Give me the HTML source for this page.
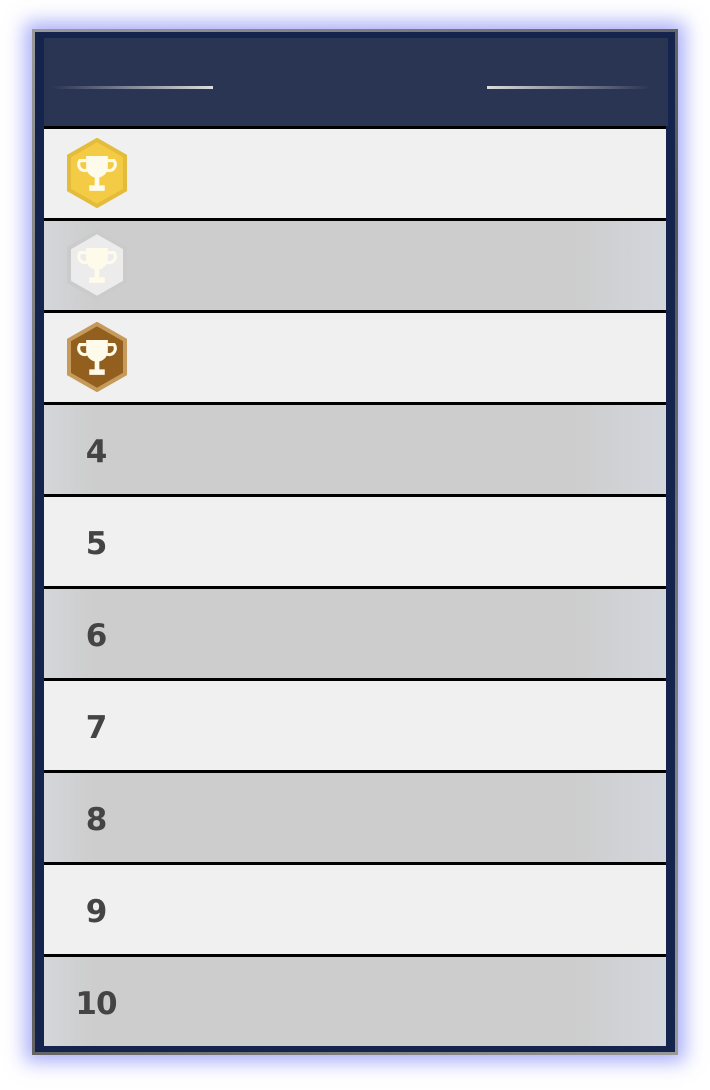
<!DOCTYPE html>
<html><head><style>
html,body{margin:0;padding:0;background:#fff;width:710px;height:1090px;overflow:hidden}
.outer{position:absolute;left:32px;top:29px;width:646px;height:1026px;box-sizing:border-box;
background:linear-gradient(135deg,#9a9a9a,#555 50%,#999);box-shadow:0 0 18px 7px rgba(100,110,240,.55)}
.navy{position:absolute;left:3px;top:3px;right:3px;bottom:3px;background:#15244d}
.head{position:absolute;left:44px;top:38px;width:624px;height:88px;background:#2a3554}
.ln{position:absolute;top:86px;height:3px}
.row{position:absolute;left:44px;width:622px;height:89px;border-top:3px solid #000}
.w{background:#f0f0f0}
.g{background:linear-gradient(90deg,#d4d6da 0,#cdcdcd 8%,#cdcdcd 85%,#d3d6dc 100%)}
.num{position:absolute;left:0;width:104px;text-align:center;top:29px;font:bold 31px "DejaVu Sans",sans-serif;color:#444;letter-spacing:-1px}
svg{position:absolute;left:22px;top:9px}
</style></head><body>
<div class="outer"><div class="navy"></div></div>
<div class="head"></div>
<div class="ln" style="left:52px;width:161px;background:linear-gradient(90deg,rgba(255,255,255,0),#ddd)"></div>
<div class="ln" style="left:487px;width:163px;background:linear-gradient(90deg,#ddd,rgba(255,255,255,0))"></div>

<div class="row w" style="top:126px"><svg width="62" height="72" viewBox="0 0 62 72"><polygon points="31,2 59,18 59,52 31,68 3,52 3,18" fill="#f4cb45" stroke="#e2bc3a" stroke-width="4"/><g fill="#fffbea" stroke="#fffbea" transform="translate(31 35) scale(1.55) translate(-31 -36)"><path d="M24 25h14v7a7 7 0 0 1-14 0z" stroke="none"/><path d="M24 28h-4a4 4 0 0 0 5 6 M38 28h4a4 4 0 0 1-5 6" fill="none" stroke-width="2"/><path d="M29.5 38h3v6h-3z M26 44h10v3.5h-10z" stroke="none"/></g></svg></div>
<div class="row g" style="top:218px"><svg width="62" height="72" viewBox="0 0 62 72"><polygon points="31,2 59,18 59,52 31,68 3,52 3,18" fill="#ececec" stroke="#cbcbcb" stroke-width="4"/><g fill="#fffbea" stroke="#fffbea" transform="translate(31 35) scale(1.55) translate(-31 -36)"><path d="M24 25h14v7a7 7 0 0 1-14 0z" stroke="none"/><path d="M24 28h-4a4 4 0 0 0 5 6 M38 28h4a4 4 0 0 1-5 6" fill="none" stroke-width="2"/><path d="M29.5 38h3v6h-3z M26 44h10v3.5h-10z" stroke="none"/></g></svg></div>
<div class="row w" style="top:310px"><svg width="62" height="72" viewBox="0 0 62 72"><polygon points="31,2 59,18 59,52 31,68 3,52 3,18" fill="#925f1e" stroke="#c59a5a" stroke-width="4"/><g fill="#fffbea" stroke="#fffbea" transform="translate(31 35) scale(1.55) translate(-31 -36)"><path d="M24 25h14v7a7 7 0 0 1-14 0z" stroke="none"/><path d="M24 28h-4a4 4 0 0 0 5 6 M38 28h4a4 4 0 0 1-5 6" fill="none" stroke-width="2"/><path d="M29.5 38h3v6h-3z M26 44h10v3.5h-10z" stroke="none"/></g></svg></div>
<div class="row g" style="top:402px"><div class="num">4</div></div>
<div class="row w" style="top:494px"><div class="num">5</div></div>
<div class="row g" style="top:586px"><div class="num">6</div></div>
<div class="row w" style="top:678px"><div class="num">7</div></div>
<div class="row g" style="top:770px"><div class="num">8</div></div>
<div class="row w" style="top:862px"><div class="num">9</div></div>
<div class="row g" style="top:954px"><div class="num">10</div></div>
</body></html>
